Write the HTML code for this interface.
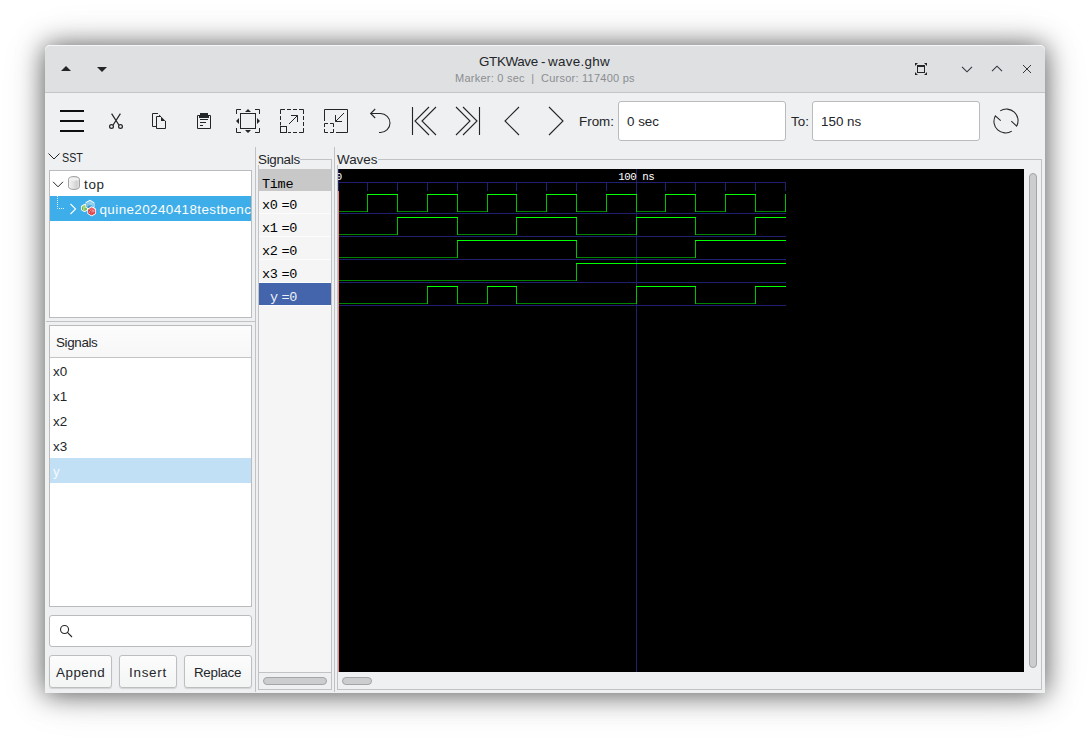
<!DOCTYPE html>
<html><head><meta charset="utf-8">
<style>
*{box-sizing:border-box;margin:0;padding:0}
html,body{width:1090px;height:738px;overflow:hidden;background:#fff}
body{font-family:"Liberation Sans",sans-serif;font-size:13px;color:#232629;position:relative}
.abs{position:absolute}
#win{position:absolute;left:45px;top:45px;width:1000px;height:648px;background:#eff0f1;border-radius:5px 5px 0 0;
 box-shadow:0 1px 26px rgba(0,0,0,.60),0 2px 46px rgba(0,0,0,.16)}
#tbar{position:absolute;left:0;top:0;width:1000px;height:47px;background:#dee0e2;border-radius:5px 5px 0 0;box-shadow:inset 0 1px 0 rgba(255,255,255,.7)}
#tsep{position:absolute;left:0;top:47px;width:1000px;height:1px;background:#c3c5c7}
.t{position:absolute;white-space:nowrap;line-height:1}
.box{position:absolute;background:#fff;border:1px solid #b9bbbd}
.entry{position:absolute;background:#fff;border:1px solid #b9bbbd;border-radius:3px}
.btn{position:absolute;border:1px solid #bcbec0;border-radius:3px;background:linear-gradient(#fcfcfc,#f3f4f4);box-shadow:0 1px 1px rgba(0,0,0,.12)}
.ln{position:absolute;background:#c0c2c4}
svg{position:absolute;overflow:visible}
.mono{font-family:"Liberation Mono",monospace}
</style></head><body>
<div id="win">
 <div id="tbar"></div><div id="tsep"></div>
</div>
<div id="c" class="abs" style="left:0;top:0;width:1090px;height:738px">
<!-- TITLEBAR -->
<svg style="left:61px;top:66px" width="10" height="5"><path d="M0 5 L5 0 L10 5Z" fill="#232629"/></svg>
<svg style="left:97px;top:67px" width="10" height="5"><path d="M0 0 L10 0 L5 5Z" fill="#232629"/></svg>
<div class="t" id="title" style="left:479px;top:55px;font-size:13.4px;color:#232629;letter-spacing:-.08px"><span style="letter-spacing:-.35px">GTKWave</span><span style="letter-spacing:-.6px"> - </span><span style="letter-spacing:.3px">wave.ghw</span></div>
<div class="t" id="subtitle" style="left:455px;top:73px;font-size:11px;color:#8b8e90;letter-spacing:.24px">Marker: 0 sec &nbsp;|&nbsp; Cursor: 117400 ps</div>
<!-- titlebar buttons -->
<svg id="ic-keep" style="left:915px;top:63px" width="12" height="12" fill="none" stroke="#232629">
 <rect x="2.5" y="3" width="7" height="6.5" stroke-width="1"/><rect x="2" y="2" width="8" height="2" fill="#232629" stroke="none"/>
 <path d="M0 0h3l-3 3z M12 0h-3l3 3z M0 12h3l-3-3z M12 12h-3l3-3z" fill="#232629" stroke="none"/>
</svg>
<svg style="left:962px;top:66px" width="10" height="7" fill="none" stroke="#31363b" stroke-width="1.1"><path d="M0 0.8 L5 5.8 L10 0.8"/></svg>
<svg style="left:992px;top:65px" width="10" height="7" fill="none" stroke="#31363b" stroke-width="1.1"><path d="M0 6.2 L5 1.2 L10 6.2"/></svg>
<svg style="left:1023px;top:65px" width="8" height="8" fill="none" stroke="#31363b" stroke-width="1"><path d="M0 0 L8 8 M8 0 L0 8"/></svg>
<!-- TOOLBAR -->
<div id="toolbar">
<!-- hamburger -->
<svg style="left:60px;top:109px" width="24" height="24" shape-rendering="crispEdges"><path d="M0 1h24v2H0zM0 11h24v2H0zM0 21h24v2H0z" fill="#0d0f11"/></svg>
<!-- cut -->
<svg style="left:108px;top:113px" width="16" height="16" fill="none" stroke="#232629" stroke-width="1.25"><path d="M3.6 0.7 L10.9 12 M12.4 0.7 L5.1 12"/><circle cx="3.5" cy="13.4" r="1.9"/><circle cx="12.5" cy="13.4" r="1.9"/></svg>
<!-- copy -->
<svg style="left:152px;top:113px" width="16" height="16" fill="none" stroke="#232629" stroke-width="1"><path d="M6 0.5H0.5V13.5H4.5"/><path d="M9 3.5H4.5V15.5H13.5V8"/><path d="M5.5 0L14 8.5V8H9V3.5H7V1.5Z" fill="#232629" stroke="none"/></svg>
<!-- paste -->
<svg style="left:196px;top:113px" width="16" height="16" fill="none" stroke="#232629" stroke-width="1"><path d="M1.5 2.5 H14.5 V15.5 H1.5 Z"/><path d="M4 0h8v2h1v3H3V2h1z" fill="#232629" stroke="none"/><path d="M4 6.5H12 M4 9.5H10 M4 12.5H7"/></svg>
<!-- zoom fit -->
<svg style="left:236px;top:109px" width="24" height="24" fill="none" stroke="#232629" stroke-width="1"><path d="M0.5 5V0.5H5M19 0.5H23.5V5M23.5 19V23.5H19M5 23.5H0.5V19"/><rect x="4.5" y="4.5" width="15" height="15"/><path d="M12 0L15 3H9Z M12 24L15 21H9Z M0 12L3 9V15Z M24 12L21 9V15Z" fill="#232629" stroke="none"/></svg>
<!-- zoom in -->
<svg style="left:280px;top:109px" width="24" height="24" fill="none" stroke="#232629" stroke-width="1"><path d="M0.5 5V0.5H5M7 0.5H11M13 0.5H17M19 0.5H23.5V5M23.5 7V11M23.5 13V17M23.5 19V23.5H19M17 23.5H13M11 23.5H8M0.5 7V11M0.5 13V16.5"/><rect x="0.5" y="17.5" width="6" height="6"/><path d="M9 15L17.5 6.5M11 6.5H17.5V13"/></svg>
<!-- zoom out -->
<svg style="left:324px;top:109px" width="24" height="24" fill="none" stroke="#232629" stroke-width="1"><path d="M0.5 12V0.5H23.5V23.5H12"/><path d="M0.5 18V14.5H4M6 14.5H9.5V18M9.5 20V23.5H6M4 23.5H0.5V20"/><path d="M20 4L11.5 12.5M11.5 6V12.5H18"/></svg>
<!-- undo -->
<svg style="left:368px;top:109px" width="24" height="24" fill="none" stroke="#232629" stroke-width="1.05"><path d="M7.2 0L2.6 4.5L7.2 9"/><path d="M2.6 4.5H12.5A9.5 9.5 0 0 1 12.5 23.5H11"/></svg>
<!-- go first -->
<svg style="left:412px;top:107px" width="24" height="28" fill="none" stroke="#232629" stroke-width="1.12"><path d="M0.5 0V28 M17 0 L3 14 L17 28 M24 0 L10 14 L24 28"/></svg>
<!-- go last -->
<svg style="left:456px;top:107px" width="24" height="28" fill="none" stroke="#232629" stroke-width="1.12"><path d="M23.5 0V28 M7 0 L21 14 L7 28 M0 0 L14 14 L0 28"/></svg>
<!-- prev -->
<svg style="left:505px;top:107px" width="14" height="28" fill="none" stroke="#232629" stroke-width="1.12"><path d="M14 0 L0 14 L14 28"/></svg>
<!-- next -->
<svg style="left:549px;top:107px" width="14" height="28" fill="none" stroke="#232629" stroke-width="1.12"><path d="M0 0 L14 14 L0 28"/></svg>
<div class="t" id="lfrom" style="left:579px;top:115px;font-size:13.4px">From:</div>
<div class="entry" style="left:618px;top:101px;width:168px;height:40px"></div>
<div class="t" id="vfrom" style="left:627px;top:115px;font-size:13.4px">0 sec</div>
<div class="t" id="lto" style="left:791px;top:115px;font-size:13.4px">To:</div>
<div class="entry" style="left:812px;top:101px;width:168px;height:40px"></div>
<div class="t" id="vto" style="left:821px;top:115px;font-size:13.4px">150 ns</div>
<!-- reload -->
<svg style="left:994px;top:109px" width="24" height="24" fill="none" stroke="#232629" stroke-width="1.05"><path d="M6.2 1.9A11.6 11.6 0 0 1 22.7 17.1L17.3 12.2M17.8 22.1A11.6 11.6 0 0 1 1.3 6.9L6.7 11.6"/></svg>
</div>
<!-- LEFT PANEL -->
<div id="left">
<!-- SST expander -->
<svg style="left:48px;top:153px" width="12" height="7" fill="none" stroke="#232629" stroke-width="1"><path d="M0.5 0.5 L6 6 L11.5 0.5"/></svg>
<div class="t" id="sst" style="left:62px;top:151px;font-size:13.4px;transform:scaleX(.80);transform-origin:0 0">SST</div>
<!-- tree box 49..252 x 170..318 -->
<div class="box" style="left:49px;top:170px;width:203px;height:148px;overflow:hidden">
 <div class="abs" style="left:0;top:25px;width:201px;height:25px;background:#3daee9"></div>
</div>
<svg style="left:53px;top:181px" width="10" height="7" fill="none" stroke="#232629" stroke-width="1"><path d="M0 0.8 L5 5.8 L10 0.8"/></svg>
<!-- cylinder icon 68..80 x 176..190 -->
<svg id="ic-cyl" style="left:68px;top:176px" width="12" height="14">
 <defs><linearGradient id="cg" x1="0" x2="1"><stop offset="0" stop-color="#f4f4f4"/><stop offset=".45" stop-color="#e2e2e2"/><stop offset=".75" stop-color="#d0d0d0"/><stop offset="1" stop-color="#e4e4e4"/></linearGradient></defs>
 <path d="M0.5 3.2 V10.8 A5.5 2.7 0 0 0 11.5 10.8 V3.2 A5.5 2.7 0 0 0 0.5 3.2Z" fill="url(#cg)" stroke="#a3a3a3" stroke-width="1"/>
 <ellipse cx="6" cy="3.1" rx="4.6" ry="1.7" fill="#f1f1f1"/>
</svg>
<div class="t" id="ttop" style="left:84px;top:178px;font-size:13.4px;letter-spacing:.7px">top</div>
<!-- tree dotted lines -->
<svg style="left:57px;top:196px" width="8" height="14" fill="none" stroke="#e8f5fc" stroke-width="1" stroke-dasharray="1 1"><path d="M0.5 0 V12.5 H7"/></svg>
<svg style="left:70px;top:204px" width="7" height="10" fill="none" stroke="#fcfcfc" stroke-width="1.1"><path d="M0.5 0 L5.6 5 L0.5 10"/></svg>
<!-- module icon 81..97 x 200..216 -->
<svg id="ic-mod" style="left:81px;top:200px" width="16" height="16"><path d="M3.5 4.8 L6.2 6.4 L6.2 9.6 L3.5 11.2 L0.8 9.6 L0.8 6.4Z" fill="#fff" stroke="#fff" stroke-width="1.7" stroke-linejoin="round"/><path d="M3.5 4.8 L6.2 6.4 L3.5 8.0 L0.8 6.4Z" fill="#a2d16a"/><path d="M0.8 6.4 L3.5 8.0 L3.5 11.2 L0.8 9.6Z" fill="#63ab3a"/><path d="M6.2 6.4 L6.2 9.6 L3.5 11.2 L3.5 8.0Z" fill="#7cbd49"/><path d="M9.0 0.7 L12.6 2.9 L12.6 7.1 L9.0 9.3 L5.4 7.1 L5.4 2.8Z" fill="#fff" stroke="#fff" stroke-width="1.7" stroke-linejoin="round"/><path d="M9.0 0.7 L12.6 2.9 L9.0 5.0 L5.4 2.8Z" fill="#86ccee"/><path d="M5.4 2.8 L9.0 5.0 L9.0 9.3 L5.4 7.1Z" fill="#2f95cf"/><path d="M12.6 2.9 L12.6 7.1 L9.0 9.3 L9.0 5.0Z" fill="#4aa9dd"/><path d="M10.7 7.2 L14.2 9.3 L14.2 13.3 L10.7 15.4 L7.2 13.3 L7.2 9.2Z" fill="#fff" stroke="#fff" stroke-width="1.7" stroke-linejoin="round"/><path d="M10.7 7.2 L14.2 9.3 L10.7 11.3 L7.2 9.2Z" fill="#ec6168"/><path d="M7.2 9.2 L10.7 11.3 L10.7 15.4 L7.2 13.3Z" fill="#cf2934"/><path d="M14.2 9.3 L14.2 13.3 L10.7 15.4 L10.7 11.3Z" fill="#dd404a"/><path d="M6.6 3.4V6.6M8 4.2V6M10.2 2.8V5M11.4 4V6.2" stroke="#d9f0fa" stroke-width=".6" fill="none"/><path d="M9.4 11.2A.9 .9 0 1 0 9.4 13M11.9 10.5V12.6M13 10V12" stroke="#f9cfd2" stroke-width=".7" fill="none"/><path d="M2 7.4L2.8 10.2" stroke="#e3f3d3" stroke-width=".7" fill="none"/></svg>
<div class="abs" style="left:50px;top:196px;width:201px;height:25px;overflow:hidden"><div class="t" id="tquine" style="left:49.5px;top:7px;font-size:13.4px;color:#fcfcfc;letter-spacing:.42px">quine20240418testbench</div></div>
<!-- hpane separator -->
<div class="ln" style="left:46px;top:321px;width:209px;height:1px"></div>
<!-- signals list box 49..252 x 325..607 -->
<div class="box" style="left:49px;top:325px;width:203px;height:282px;overflow:hidden">
 <div class="abs" style="left:0;top:0;width:201px;height:31px;background:linear-gradient(#fcfcfc,#f7f7f7)"></div>
 <div class="abs" style="left:0;top:31px;width:201px;height:1px;background:#c2c4c5"></div>
 <div class="abs" style="left:0;top:132px;width:201px;height:25px;background:#c2e0f5"></div>
</div>
<div class="t" id="lsig" style="left:56px;top:336px;font-size:13.4px;letter-spacing:-.35px">Signals</div>
<div class="t" id="lx0" style="left:53px;top:365px;font-size:13.4px">x0</div>
<div class="t" id="lx1" style="left:53px;top:390px;font-size:13.4px">x1</div>
<div class="t" id="lx2" style="left:53px;top:415px;font-size:13.4px">x2</div>
<div class="t" id="lx3" style="left:53px;top:440px;font-size:13.4px">x3</div>
<div class="t" id="ly" style="left:53px;top:465px;font-size:13.4px;color:#f4f9fd">y</div>
<!-- search -->
<div class="entry" style="left:49px;top:615px;width:203px;height:32px"></div>
<svg style="left:60px;top:624px" width="13" height="14" fill="none" stroke="#232629" stroke-width="1.1"><circle cx="4.55" cy="5.45" r="4"/><path d="M7.4 8.3 L12 13"/></svg>
<!-- buttons -->
<div class="btn" style="left:49px;top:655px;width:63px;height:33px"></div>
<div class="btn" style="left:119px;top:655px;width:58px;height:33px"></div>
<div class="btn" style="left:184px;top:655px;width:68px;height:33px"></div>
<div class="t" id="bapp" style="left:56px;top:666px;font-size:13.4px;letter-spacing:.5px">Append</div>
<div class="t" id="bins" style="left:129px;top:666px;font-size:13.4px;letter-spacing:.75px">Insert</div>
<div class="t" id="brep" style="left:194px;top:666px;font-size:13.4px;letter-spacing:-.3px">Replace</div>
</div>
<!-- SIGNALS -->
<div id="sig">
<div class="ln" style="left:255px;top:147px;width:1px;height:545px"></div>
<div class="t" id="fsig" style="left:258px;top:153px;font-size:13.4px;letter-spacing:-.3px">Signals</div>
<!-- frame borders -->
<div class="ln" style="left:300px;top:159px;width:32px;height:1px"></div>
<div class="ln" style="left:258px;top:165px;width:1px;height:525px"></div>
<div class="ln" style="left:331px;top:159px;width:1px;height:531px"></div>
<div class="ln" style="left:258px;top:689px;width:74px;height:1px"></div>
<div class="abs" style="left:259px;top:169px;width:72px;height:503px;background:#f5f5f5"></div>
<div class="abs" style="left:259px;top:169px;width:72px;height:22px;background:#c8c8c8"></div>
<div class="abs" style="left:259px;top:213px;width:72px;height:1px;background:#fcfcfc"></div>
<div class="abs" style="left:259px;top:236px;width:72px;height:1px;background:#fcfcfc"></div>
<div class="abs" style="left:259px;top:259px;width:72px;height:1px;background:#fcfcfc"></div>
<div class="abs" style="left:259px;top:282px;width:72px;height:1px;background:#fcfcfc"></div>
<div class="abs" style="left:259px;top:305px;width:72px;height:1px;background:#fcfcfc"></div>
<div class="abs" style="left:259px;top:283px;width:72px;height:22px;background:#4464ac"></div>
<div class="ln" style="left:259px;top:672px;width:72px;height:1px"></div>
<div class="abs" style="left:263px;top:677px;width:64px;height:8px;border-radius:4px;background:#cbcdcf;border:1px solid #a3a5a7"></div>
<div class="t mono" id="mtime" style="left:262px;top:178px;font-size:13.5px;letter-spacing:-.3px;color:#000">Time</div>
<div class="t mono m" style="left:262px;top:199px;font-size:13.5px;letter-spacing:-.3px;color:#000">x0</div><div class="t mono m" style="left:281.5px;top:199px;font-size:13.5px;letter-spacing:-.3px;color:#000">=0</div>
<div class="t mono m" style="left:262px;top:222px;font-size:13.5px;letter-spacing:-.3px;color:#000">x1</div><div class="t mono m" style="left:281.5px;top:222px;font-size:13.5px;letter-spacing:-.3px;color:#000">=0</div>
<div class="t mono m" style="left:262px;top:245px;font-size:13.5px;letter-spacing:-.3px;color:#000">x2</div><div class="t mono m" style="left:281.5px;top:245px;font-size:13.5px;letter-spacing:-.3px;color:#000">=0</div>
<div class="t mono m" style="left:262px;top:268px;font-size:13.5px;letter-spacing:-.3px;color:#000">x3</div><div class="t mono m" style="left:281.5px;top:268px;font-size:13.5px;letter-spacing:-.3px;color:#000">=0</div>
<div class="t mono m" style="left:270px;top:291px;font-size:13.5px;letter-spacing:-.3px;color:#eef1f8">y</div><div class="t mono m" style="left:281.5px;top:291px;font-size:13.5px;letter-spacing:-.3px;color:#eef1f8">=0</div>
</div>
<!-- WAVES -->
<div id="waves">
<div class="ln" style="left:334px;top:147px;width:1px;height:545px"></div>
<div class="t" id="fwav" style="left:337px;top:153px;font-size:13.4px">Waves</div>
<div class="ln" style="left:378px;top:159px;width:664px;height:1px"></div>
<div class="ln" style="left:337px;top:165px;width:1px;height:525px"></div>
<div class="ln" style="left:1041px;top:159px;width:1px;height:531px"></div>
<div class="ln" style="left:337px;top:689px;width:705px;height:1px"></div>
<svg id="wv" style="left:338px;top:169px" width="686" height="503" shape-rendering="crispEdges" fill="none"><rect x="0" y="0" width="686" height="503" fill="#000"/><path d="M0 13.5H448M0 44.5H448M0 67.5H448M0 90.5H448M0 113.5H448M0 136.5H448M0.5 13V22M29.5 13V22M59.5 13V22M89.5 13V22M119.5 13V22M149.5 13V22M178.5 13V22M208.5 13V22M238.5 13V22M268.5 13V22M298.5 13V22M327.5 13V22M357.5 13V22M387.5 13V22M417.5 13V22M447.5 13V22M298.5 0V503M0.5 0V22" stroke="#202070" stroke-width="1"/><path d="M1 42.5H30M59 42.5H90M119 42.5H150M178 42.5H209M238 42.5H269M298 42.5H328M357 42.5H388M417 42.5H448M1 65.5H30M29 65.5H60M119 65.5H150M149 65.5H179M238 65.5H269M268 65.5H299M357 65.5H388M387 65.5H418M1 88.5H30M29 88.5H60M59 88.5H90M89 88.5H120M238 88.5H269M268 88.5H299M298 88.5H328M327 88.5H358M1 111.5H30M29 111.5H60M59 111.5H90M89 111.5H120M119 111.5H150M149 111.5H179M178 111.5H209M208 111.5H239M1 134.5H30M29 134.5H60M59 134.5H90M119 134.5H150M178 134.5H209M208 134.5H239M238 134.5H269M268 134.5H299M357 134.5H388M387 134.5H418" stroke="#008400" stroke-width="1"/><path d="M29.5 25V43M59.5 25V43M89.5 25V43M119.5 25V43M149.5 25V43M178.5 25V43M208.5 25V43M238.5 25V43M268.5 25V43M298.5 25V43M327.5 25V43M357.5 25V43M387.5 25V43M417.5 25V43M447.5 25V43M59.5 48V66M119.5 48V66M178.5 48V66M238.5 48V66M298.5 48V66M357.5 48V66M417.5 48V66M119.5 71V89M238.5 71V89M357.5 71V89M238.5 94V112M89.5 117V135M119.5 117V135M149.5 117V135M178.5 117V135M298.5 117V135M357.5 117V135M417.5 117V135" stroke="#00c000" stroke-width="1"/><path d="M29 25.5H60M89 25.5H120M149 25.5H179M208 25.5H239M268 25.5H299M327 25.5H358M387 25.5H418M59 48.5H90M89 48.5H120M178 48.5H209M208 48.5H239M298 48.5H328M327 48.5H358M417 48.5H448M119 71.5H150M149 71.5H179M178 71.5H209M208 71.5H239M357 71.5H388M387 71.5H418M417 71.5H448M238 94.5H269M268 94.5H299M298 94.5H328M327 94.5H358M357 94.5H388M387 94.5H418M417 94.5H448M89 117.5H120M149 117.5H179M298 117.5H328M327 117.5H358M417 117.5H448" stroke="#00ff00" stroke-width="1"/><path d="M0.5 22V503" stroke="#ff8080" stroke-width="1"/></svg>
<div class="t mono" id="w0" style="left:338px;top:171.7px;font-size:10.8px;color:#fff;width:4.3px;height:12px;overflow:hidden;direction:rtl">0</div>
<div class="t mono" id="w100" style="left:618.3px;top:171.7px;font-size:10.8px;letter-spacing:-.48px;color:#fff;white-space:pre">100 ns</div>
<div class="abs" style="left:342px;top:677px;width:30px;height:8px;border-radius:4px;background:#cbcdcf;border:1px solid #a3a5a7"></div>
<div class="abs" style="left:1029px;top:173px;width:8px;height:495px;border-radius:4px;background:#cbcdcf;border:1px solid #a3a5a7"></div>
</div>
</div>
</body></html>
